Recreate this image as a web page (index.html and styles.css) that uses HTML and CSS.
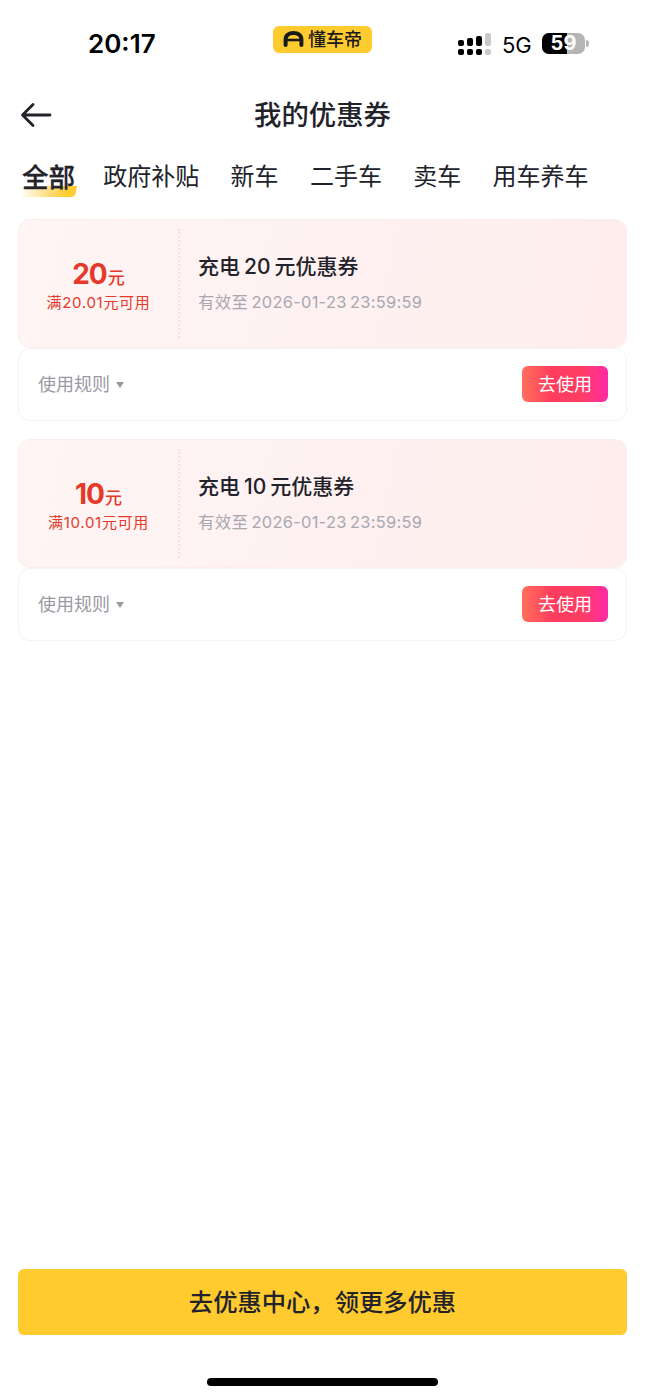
FILE: index.html
```html
<!DOCTYPE html>
<html lang="zh-CN">
<head>
  <meta charset="UTF-8" />
  <meta name="viewport" content="width=device-width, initial-scale=1.0"/>
  <title>我的优惠券</title>
  <link rel="stylesheet" href="styles.css">
</head>
<body>

<div class="page">
  <!-- 状态栏 -->
  <div class="status-bar">
    <span class="time">20:17</span>
    <div class="app-logo">
      <svg class="logo-icon" width="21" height="16" viewBox="0 0 21 16">
        <path d="M2.6 14 V8.5 C2.6 4 6 2 10.5 2 C15 2 18.4 4 18.4 8.5 V14" fill="none" stroke="#1a1a1a" stroke-width="4" stroke-linecap="round"/>
        <path d="M3 9 H18" stroke="#1a1a1a" stroke-width="2.6"/>
      </svg>
      <span class="logo-text">懂车帝</span>
    </div>
    <svg class="signal" width="33" height="22" viewBox="0 0 33 22">
      <rect x="0" y="7" width="6" height="6" rx="2" fill="#000"/>
      <rect x="9" y="5" width="6" height="8" rx="2" fill="#000"/>
      <rect x="18" y="3" width="6" height="10" rx="2" fill="#000"/>
      <rect x="27" y="0" width="6" height="13" rx="2" fill="#c9c9c9"/>
      <rect x="0" y="16" width="6" height="6" rx="2" fill="#000"/>
      <rect x="9" y="16" width="6" height="6" rx="2" fill="#000"/>
      <rect x="18" y="16" width="6" height="6" rx="2" fill="#000"/>
      <rect x="27" y="16" width="6" height="6" rx="2" fill="#c9c9c9"/>
    </svg>
    <span class="network">5G</span>
    <div class="battery">
      <div class="battery-fill" style="width: 59%"></div>
      <span class="battery-num">59</span>
    </div>
    <div class="battery-nub"></div>
  </div>

  <!-- 标题 -->
  <div class="nav">
    <svg class="back" width="32" height="26" viewBox="0 0 32 26">
      <path d="M30 13 H3 M13 2.5 L2.5 13 L13 23.5" fill="none" stroke="#22222b" stroke-width="2.8" stroke-linecap="round" stroke-linejoin="round"/>
    </svg>
    <h1 class="nav-title">我的优惠券</h1>
  </div>

  <!-- 分类 -->
  <div class="tabs">
    <span class="tab tab-active">全部</span>
    <span class="tab">政府补贴</span>
    <span class="tab">新车</span>
    <span class="tab">二手车</span>
    <span class="tab">卖车</span>
    <span class="tab">用车养车</span>
  </div>

  <!-- 优惠券列表 -->
  <div class="coupon-list">
    <div class="coupon">
      <div class="coupon-top">
        <div class="coupon-price">
          <div class="price-line"><b class="price-num">20</b><span class="price-unit">元</span></div>
          <div class="price-cond">满20.01元可用</div>
        </div>
        <div class="coupon-info">
          <div class="coupon-name">充电<span class="num">20</span>元优惠券</div>
          <div class="coupon-date">有效至 2026-01-23 23:59:59</div>
        </div>
      </div>
      <div class="coupon-bottom">
        <span class="rules">使用规则</span>
        <span class="rules-arrow"></span>
        <button class="use-btn">去使用</button>
      </div>
    </div>

    <div class="coupon">
      <div class="coupon-top">
        <div class="coupon-price">
          <div class="price-line"><b class="price-num">10</b><span class="price-unit">元</span></div>
          <div class="price-cond">满10.01元可用</div>
        </div>
        <div class="coupon-info">
          <div class="coupon-name">充电<span class="num">10</span>元优惠券</div>
          <div class="coupon-date">有效至 2026-01-23 23:59:59</div>
        </div>
      </div>
      <div class="coupon-bottom">
        <span class="rules">使用规则</span>
        <span class="rules-arrow"></span>
        <button class="use-btn">去使用</button>
      </div>
    </div>
  </div>

  <button class="center-btn">去优惠中心，领更多优惠</button>
  <div class="home-bar"></div>
</div>

</body>
</html>
```

FILE: styles.css
```css
* {
  box-sizing: border-box;
}
body {
  margin: 0;
  background: #fff;
  font-family: "Inter", "Noto Sans CJK SC", sans-serif;
  color: #22222b;
}
.page {
  height: 1398px;
  display: flex;
  flex-direction: column;
  overflow: hidden;
}

/* status bar */
.status-bar {
  height: 90px;
  padding: 0 0 3px 88px;
  display: flex;
  align-items: center;
}
.time {
  width: 185px;
  font-size: 26px;
  font-weight: 600;
  color: #000;
}
.app-logo {
  width: 99px;
  height: 27px;
  margin: -9px 86px 0 0;
  background: #ffcb2f;
  border-radius: 6px;
  display: flex;
  align-items: center;
  justify-content: center;
  gap: 4px;
}
.logo-text {
  font-size: 18px;
  line-height: 27px;
  font-weight: 500;
  color: #1a1a1a;
}
.signal {
  margin-right: 11px;
}
.network {
  width: 40px;
  margin-top: 2px;
  font-size: 22px;
  color: #000;
}
.battery {
  position: relative;
  width: 43px;
  height: 21px;
  background: #b5b5b5;
  border-radius: 7px;
  display: flex;
  align-items: center;
  justify-content: center;
}
.battery-fill {
  position: absolute;
  left: 0;
  top: 0;
  bottom: 0;
  background: #000;
  border-radius: 7px 0 0 7px;
}
.battery-num {
  position: relative;
  font-size: 20px;
  line-height: 21px;
  font-weight: 700;
  color: #fff;
}
.battery-nub {
  width: 3px;
  height: 7px;
  margin-left: 1px;
  background: #b5b5b5;
  border-radius: 0 3px 3px 0;
}

/* nav */
.nav {
  height: 50px;
  padding-bottom: 4px;
  position: relative;
  display: flex;
  align-items: center;
  justify-content: center;
}
.back {
  position: absolute;
  left: 20px;
  top: 12px;
}
.nav-title {
  margin: 0;
  font-size: 27.4px;
  font-weight: 500;
  color: #22222b;
}

/* tabs */
.tabs {
  height: 50px;
  margin-top: 12px;
  padding-left: 22px;
  display: flex;
  align-items: center;
  gap: 31.3px;
}
.tab {
  position: relative;
  font-size: 24px;
  line-height: 34px;
  color: #22222b;
}
.tab-active {
  width: 53px;
  margin-right: -3px;
  font-size: 26.5px;
  font-weight: 500;
  -webkit-text-stroke: 0.3px #22222b;
  white-space: nowrap;
  z-index: 0;
}
.tab-active::after {
  content: "";
  position: absolute;
  z-index: -1;
  left: 0;
  right: -1px;
  bottom: -3px;
  height: 11px;
  background: linear-gradient(90deg, #fffdf5, #ffe08a 45%, #ffcb2f 85%);
  border-radius: 0 0 4px 4px;
  transform: skewX(-10deg);
}

/* coupons */
.coupon-list {
  margin-top: 17px;
  padding: 0 18px;
  display: flex;
  flex-direction: column;
  gap: 18px;
}
.coupon-top {
  height: 129px;
  padding: 9px 0;
  display: flex;
  background: linear-gradient(100deg, #fff5f5, #feeded);
  border: 1px solid #fdeeee;
  border-radius: 12px;
}
.coupon-price {
  width: 161px;
  padding-top: 1px;
  border-right: 2px dotted #fbdde0;
  display: flex;
  flex-direction: column;
  align-items: center;
  justify-content: center;
  color: #e5392a;
}
.price-line {
  display: flex;
  align-items: baseline;
  height: 36px;
  line-height: 36px;
}
.price-num {
  font-size: 28px;
  font-weight: 700;
  letter-spacing: -1px;
}
.price-unit {
  margin-left: 1px;
  font-size: 17px;
  font-weight: 500;
}
.price-cond {
  margin-top: 1px;
  font-size: 15px;
  line-height: 20px;
  letter-spacing: 0.7px;
}
.coupon-info {
  padding: 18px 0 0 18px;
}
.coupon-name {
  font-size: 21px;
  line-height: 40px;
  font-weight: 500;
  color: #22222b;
}
.num {
  padding: 0 4px;
}
.coupon-date {
  margin-top: 2px;
  font-size: 16.4px;
  line-height: 26px;
  letter-spacing: 0.3px;
  word-spacing: -1.5px;
  color: #a7a7b0;
}
.coupon-bottom {
  height: 73px;
  padding: 0 18px 2px 19px;
  display: flex;
  align-items: center;
  background: #fff;
  border: 1px solid #f3f3f5;
  border-radius: 12px;
}
.rules {
  padding-bottom: 2px;
  font-size: 18px;
  color: #9a9aa3;
}
.rules-arrow {
  width: 0;
  height: 0;
  margin: 2px 0 0 6px;
  border-left: 4.5px solid transparent;
  border-right: 4.5px solid transparent;
  border-top: 6px solid #9a9aa3;
}
.use-btn {
  width: 86px;
  height: 36px;
  margin-left: auto;
  padding: 0 0 2px;
  border: none;
  border-radius: 6px;
  background: linear-gradient(90deg, #ff6f5c, #ff3d5e 35%, #ff3d64 70%, #ff2aa5);
  font-family: inherit;
  font-size: 18px;
  color: #fff;
}

/* bottom */
.center-btn {
  height: 66px;
  margin: auto 18px 0;
  padding: 0 0 3px;
  border: none;
  border-radius: 6px;
  background: #ffcb2f;
  font-family: inherit;
  font-size: 24.3px;
  font-weight: 500;
  color: #22222b;
}
.home-bar {
  width: 231px;
  height: 8px;
  margin: 43px auto 12px;
  background: #000;
  border-radius: 4px;
}
```
